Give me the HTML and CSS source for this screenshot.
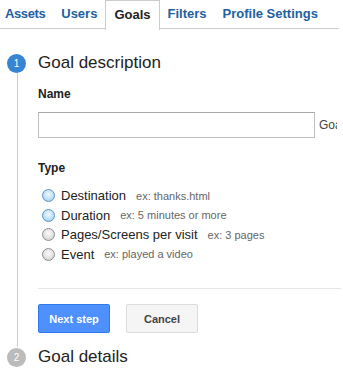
FILE: index.html
```html
<!DOCTYPE html>
<html lang="en">
<head>
    <meta charset="UTF-8">
    <meta name="viewport" content="width=device-width, initial-scale=1.0">
    <title>Goals</title>
    <link rel="stylesheet" href="styles.css">
</head>
<body>
    <div class="tabs">
        <a class="tab first">Assets</a>
        <a class="tab">Users</a>
        <a class="tab active">Goals</a>
        <a class="tab">Filters</a>
        <a class="tab">Profile Settings</a>
    </div>

    <div class="steps">
        <div class="step-head">
            <span class="step-num current">1</span>
            <span class="step-title">Goal description</span>
        </div>
        <div class="step-body">
            <div class="field-label">Name</div>
            <div class="name-row">
                <input class="text-input" type="text">
                <span class="hint-text">Goal ID</span>
            </div>

            <div class="field-label type-label">Type</div>
            <div class="radio-list">
                <label class="radio-row">
                    <span class="radio blue"></span>
                    <span class="radio-text">Destination</span>
                    <span class="example">ex: thanks.html</span>
                </label>
                <label class="radio-row">
                    <span class="radio blue"></span>
                    <span class="radio-text">Duration</span>
                    <span class="example">ex: 5 minutes or more</span>
                </label>
                <label class="radio-row">
                    <span class="radio"></span>
                    <span class="radio-text">Pages/Screens per visit</span>
                    <span class="example">ex: 3 pages</span>
                </label>
                <label class="radio-row">
                    <span class="radio"></span>
                    <span class="radio-text">Event</span>
                    <span class="example">ex: played a video</span>
                </label>
            </div>

            <div class="divider"></div>

            <div class="actions">
                <button class="btn btn-primary">Next step</button>
                <button class="btn btn-default">Cancel</button>
            </div>
        </div>
        <div class="step-head">
            <span class="step-num">2</span>
            <span class="step-title">Goal details</span>
        </div>
    </div>
</body>
</html>
```

FILE: styles.css
```css
body {
    font-family: "Liberation Sans", Arial, sans-serif;
    margin: 0;
    background-color: #fff;
    color: #222;
    overflow: hidden;
}

.tabs {
    display: flex;
    height: 28px;
    width: 339px;
    border-bottom: 1px solid #ccc;
    white-space: nowrap;
}

.tab {
    display: block;
    padding: 0 8px;
    line-height: 28px;
    font-size: 13px;
    font-weight: bold;
    color: #22609f;
}

.tab.first {
    padding-left: 5px;
    letter-spacing: -0.4px;
}

.tab.active {
    color: #222;
    background-color: #fff;
    border: 1px solid #ccc;
    border-bottom: none;
    height: 29px;
}

.steps {
    padding-top: 24px;
}

.step-head {
    display: flex;
    align-items: center;
    height: 20px;
}

.step-num {
    width: 19px;
    height: 19px;
    margin-left: 7px;
    margin-right: 12px;
    border-radius: 50%;
    background-color: #bbb;
    color: #fff;
    font-size: 10px;
    line-height: 19px;
    text-align: center;
}

.step-num.current {
    background-color: #3884d3;
}

.step-title {
    font-size: 17px;
    color: #222;
}

.step-body {
    margin-left: 17px;
    border-left: 1px solid #ccc;
    padding: 14px 0 14px 20px;
}

.field-label {
    font-size: 12px;
    font-weight: bold;
    line-height: 15px;
    color: #222;
}

.type-label {
    margin-top: 23px;
}

.name-row {
    display: flex;
    align-items: center;
    width: 299px;
    margin-top: 10px;
    overflow: hidden;
    white-space: nowrap;
}

.text-input {
    flex: none;
    width: 277px;
    height: 26px;
    box-sizing: border-box;
    margin: 0;
    border: 1px solid #c0c0c0;
    border-top-color: #a8a8a8;
}

.hint-text {
    margin-left: 4px;
    font-size: 12px;
    color: #444;
}

.radio-list {
    margin-top: 10px;
}

.radio-row {
    display: flex;
    align-items: center;
    height: 19.5px;
    padding-left: 4px;
    white-space: nowrap;
}

.radio {
    width: 11px;
    height: 11px;
    border-radius: 50%;
    border: 1px solid #8f8f8f;
    background: radial-gradient(circle at 50% 40%, #fafafa 0%, #e2e2e2 55%, #c4c4c4 100%);
    margin-right: 6px;
}

.radio.blue {
    border-color: #5b93c9;
    background: radial-gradient(circle at 50% 40%, #f2f9ff 0%, #bfe0fa 55%, #8dc4ee 100%);
}

.radio-text {
    font-size: 13px;
    color: #222;
}

.example {
    margin-left: 10px;
    font-size: 11px;
    color: #666;
}

.divider {
    height: 1px;
    background-color: #e5e5e5;
    margin-top: 24px;
    margin-right: 2px;
}

.actions {
    display: flex;
    gap: 16px;
    margin-top: 15px;
}

.btn {
    height: 29px;
    width: 72px;
    font-family: inherit;
    font-size: 11px;
    font-weight: bold;
    border-radius: 2px;
    padding: 0;
}

.btn-primary {
    background-color: #4d90fe;
    border: 1px solid #3079ed;
    color: #fff;
}

.btn-default {
    background-color: #f5f5f5;
    border: 1px solid #dcdcdc;
    color: #444;
}
```
